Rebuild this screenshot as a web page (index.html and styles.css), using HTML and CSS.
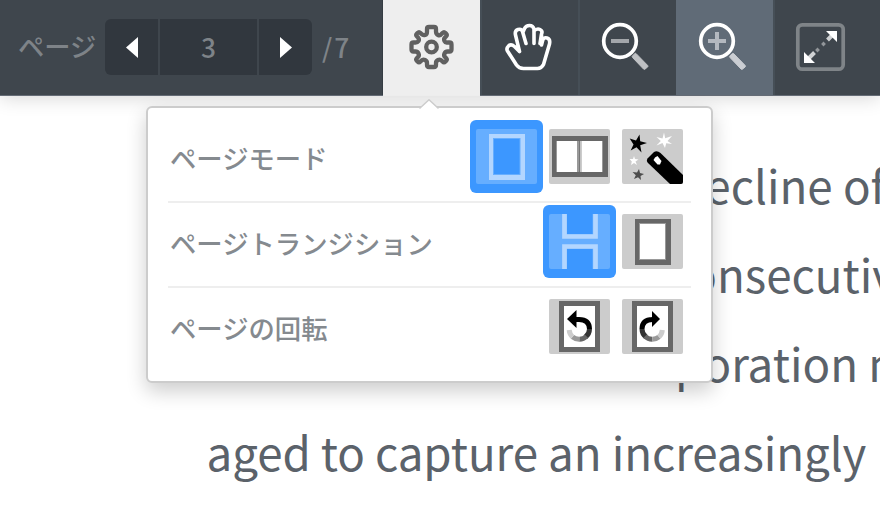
FILE: index.html
```html
<!DOCTYPE html>
<html lang="ja">
<head>
<meta charset="utf-8">
<title>Viewer</title>
<link rel="stylesheet" href="styles.css">
</head>
<body>
<header class="toolbar">
  <div class="pager">
    <span class="pager-label">ページ</span>
    <div class="pager-box">
      <button class="step"><svg width="12" height="21" viewBox="0 0 12 21"><path d="M12 0V21L0 10.5Z" fill="#fff"/></svg></button>
      <span class="current">3</span>
      <button class="step"><svg width="12" height="21" viewBox="0 0 12 21"><path d="M0 0V21L12 10.5Z" fill="#fff"/></svg></button>
    </div>
    <span class="total">/7</span>
  </div>
  <button class="tool gear">
    <svg width="97" height="96" viewBox="0 0 97 96" fill="none" stroke="#606060" stroke-width="4.300" stroke-linejoin="round">
      <circle cx="48.500" cy="47" r="5.300"/>
      <path d="M44 31.500V29Q44 27 46 27H51Q53 27 53 29V31.500Q53 34 55 35T58.500 34L59.500 33Q61 31.500 62.500 33L63 33.500Q64.500 35 63 36.500L62 37.500Q60.500 39 61.500 41T64.500 42.500H66.500Q68.500 42.500 68.500 44.500V49.500Q68.500 51.500 66.500 51.500H64.500Q62.500 51.500 61.500 53.500T62 57L63 58Q64.500 59.500 63 61L62.500 61.500Q61 63 59.500 61.500L58.500 60.500Q57 59 55 60T53 63V65Q53 67 51 67H46Q44 67 44 65V63Q44 61 42 60T38.500 60.500L37.500 61.500Q36 63 34.500 61.500L34 61Q32.500 59.500 34 58L35 57Q36.500 55.500 35.500 53.500T32.500 51.500H30.500Q28.500 51.500 28.500 49.500V44.500Q28.500 42.500 30.500 42.500H32.500Q34.500 42.500 35.500 41T35 37.500L34 36.500Q32.500 35 34 33.500L34.500 33Q36 31.500 37.500 33L38.500 34Q40 35.500 42 35T44 31.500Z"/>
    </svg>
  </button>
  <button class="tool wide">
    <svg width="98" height="95" viewBox="480 0 98 95" fill="none" stroke="#fff" stroke-width="3.600" stroke-linecap="round" stroke-linejoin="round">
      <path d="M519.500 51.500L514.500 46.500Q511 43.500 508.500 46T507.500 51L516.500 65Q519 68.500 523.500 68.500H537.500Q541.500 68.500 543.500 64.500L549.500 44Q550.500 39 547 38T542.500 41L541.500 45M519.500 51.500L515.500 35Q514.500 30.500 518 29.500T522.500 31.500L526 43.500M523 32L524.500 28.500Q526 25.500 529.500 25.500T534 29V43.500M534 31Q537 28 540 29.500T541.500 34L540 43.500M541.500 34V38"/>
    </svg>
  </button>
  <button class="tool wide">
    <svg width="98" height="95" viewBox="578 0 98 95" fill="none">
      <circle cx="620" cy="41" r="16.300" stroke="#fff" stroke-width="3.700"/>
      <path d="M611 41H629" stroke="#a3a6aa" stroke-width="4"/>
      <path d="M636 53.500L647.700 65.500Q648.300 66.300 647.700 66.900L644.900 69.200Q644.200 69.700 643.500 69L632.500 57.500Q631.800 56.500 632.500 55.800L635 53.500Q635.500 53 636 53.500Z" fill="#bfc1c4" stroke="#bfc1c4" stroke-width="1"/>
    </svg>
  </button>
  <button class="tool hovered">
    <svg width="97" height="95" viewBox="676 0 97 95" fill="none">
      <circle cx="717" cy="41" r="16.300" stroke="#fff" stroke-width="3.700"/>
      <path d="M708 41H726M717 32V50" stroke="#b3b8bf" stroke-width="4"/>
      <path d="M733.500 53.500L745.200 65.500Q745.800 66.300 745.200 66.900L742.400 69.200Q741.700 69.700 741 69L730 57.500Q729.300 56.500 730 55.800L732.500 53.500Q733 53 733.500 53.500Z" fill="#cbced3" stroke="#cbced3" stroke-width="1"/>
    </svg>
  </button>
  <button class="tool last">
    <svg width="107" height="95" viewBox="773 0 107 95" fill="none">
      <rect x="797.800" y="24.800" width="45.400" height="44.400" rx="4.500" stroke="#7f8488" stroke-width="3.700"/>
      <path d="M827.500 40L833 34.500M809 58L814.500 52.500" stroke="#d0d2d4" stroke-width="4"/>
      <path d="M822.300 45.200L824.700 42.800M816.300 51.200L818.700 48.800" stroke="#92969a" stroke-width="3.400"/>
      <path d="M826 31H837V42ZM804 52V63H815Z" fill="#fff"/>
    </svg>
  </button>
</header>

<main class="document">
  <p class="line decline">decline of</p>
  <p class="line consecutive">consecutiv</p>
  <p class="line corporation">corporation m</p>
  <p class="line aged">aged to capture an increasingly</p>
</main>

<section class="popup">
  <svg class="arrow" width="20" height="11" viewBox="0 0 20 11"><path d="M0.500 9.500L10 0.500L19.500 9.500V11H0.500Z" fill="#fff"/><path d="M0.500 9.500L10 0.800L19.500 9.500" fill="none" stroke="#ccc" stroke-width="1.500"/></svg>
  <div class="row">
    <span class="label">ページモード</span>
    <button class="option selected">
      <svg width="61" height="55" viewBox="0 0 61 55"><rect width="61" height="55" rx="2" fill="#66aeff"/><rect x="13" y="5" width="36" height="46" fill="#b3d6ff"/><rect x="17" y="9" width="27.500" height="37" fill="#66aeff"/><rect x="18" y="10" width="25.500" height="35" fill="#3c97ff"/></svg>
    </button>
    <button class="option">
      <svg width="61" height="55" viewBox="0 0 61 55"><rect width="61" height="55" rx="2" fill="#ccc"/><rect x="3" y="7" width="56" height="41" fill="#676767"/><rect x="7" y="12" width="47" height="31" fill="#fff"/><path d="M7.500 12V43M53.500 12V43" stroke="#999"/><rect x="28" y="12" width="2" height="31" fill="#999"/><rect x="30" y="12" width="1.500" height="31" fill="#777"/><rect x="31.500" y="12" width="1.500" height="31" fill="#ccc"/></svg>
    </button>
    <button class="option">
      <svg width="61" height="55" viewBox="0 0 61 55"><rect width="61" height="55" rx="2" fill="#ccc"/>
      <path d="M17.500 5.500L18.200 12.200L25 14L18.200 16.200L19.500 23.500L14.500 18.200L8.700 21.500L11.500 15.500L7.700 9.500L14 11.500Z"/>
      <path d="M42 3.500L43.200 9.300L50 7L45.500 12L50 15L44.200 14.200L43 19L40.500 14L34.500 16.500L38.800 12L34.500 8L40.500 9.500Z" fill="#fff"/>
      <path d="M12 27L13 30L16.500 30.500L13.500 32.500L15 36L12 34L9 36L9.800 32.500L7.500 30L11 30Z" fill="#fff"/>
      <path d="M17 40L18 44L22 45L18.500 47L19 51L16 48.300L12 50L13.800 46.300L10.500 43L15 43.500Z" fill="#4c4c4c"/>
      <path d="M25.500 29.500L32 23Q35 21 38.500 24L61 46V53Q61 55 59 55H48L26 34Q24 32 25.500 29.500Z"/><path d="M33 28.500L35.500 27L39.500 32L38 35.500H35.500L31.500 31Z" fill="#fff"/></svg>
    </button>
  </div>
  <div class="row">
    <span class="label">ページトランジション</span>
    <button class="option selected">
      <svg width="61" height="55" viewBox="0 0 61 55"><rect width="61" height="55" rx="2" fill="#66aeff"/><path d="M18 0H43.500V20H18ZM18 35H43.500V55H18Z" fill="#3c97ff"/><path d="M15.500 0V22.500H46.500V0M15.500 55V32.500H46.500V55" fill="none" stroke="#b3d6ff" stroke-width="4.700"/></svg>
    </button>
    <button class="option">
      <svg width="61" height="55" viewBox="0 0 61 55"><rect width="61" height="55" rx="2" fill="#ccc"/><rect x="13" y="5" width="36" height="46" fill="#676767"/><rect x="17" y="9" width="27" height="37" fill="#999"/><rect x="18" y="10" width="25" height="35" fill="#fff"/></svg>
    </button>
  </div>
  <div class="row">
    <span class="label">ページの回転</span>
    <button class="option">
      <svg width="61" height="55" viewBox="0 0 61 55"><rect width="61" height="55" rx="2" fill="#ccc"/><rect x="10" y="2" width="41" height="51" fill="#676767"/><rect x="15" y="7" width="31" height="41" fill="#fff"/><g fill="none" stroke-width="5"><path d="M27 20.500H30Q40.300 20.500 40.500 30" stroke="#000"/><path d="M40.500 30A10.200 10.200 0 0 1 36.500 38" stroke="#333"/><path d="M37.500 37.300A10.200 10.200 0 0 1 30.300 40.200" stroke="#666"/><path d="M30.300 40.200A10.200 10.200 0 0 1 23.500 37.800" stroke="#999"/><path d="M23.500 37.800A10.200 10.200 0 0 1 20.200 31" stroke="#ccc"/></g><path d="M18 20L27.500 11V29Z"/></svg>
    </button>
    <button class="option">
      <svg width="61" height="55" viewBox="0 0 61 55"><rect width="61" height="55" rx="2" fill="#ccc"/><rect x="10" y="2" width="41" height="51" fill="#676767"/><rect x="15" y="7" width="31" height="41" fill="#fff"/><g transform="translate(60.500 0) scale(-1 1)"><g fill="none" stroke-width="5"><path d="M30 20.500Q40.300 20.500 40.500 30M27 20.500H31" stroke="#000"/><path d="M40.500 30A10.200 10.200 0 0 1 36.500 38" stroke="#333"/><path d="M37.500 37.300A10.200 10.200 0 0 1 30.300 40.200" stroke="#666"/><path d="M30.300 40.200A10.200 10.200 0 0 1 23.500 37.800" stroke="#999"/><path d="M23.500 37.800A10.200 10.200 0 0 1 20.200 31" stroke="#ccc"/></g><path d="M22.500 20L30.500 12V28Z"/></g></svg>
    </button>
  </div>
</section>
</body>
</html>
```
FILE: styles.css
```css
* { box-sizing: border-box; }

body {
  position: relative;
  width: 880px;
  height: 520px;
  margin: 0;
  overflow: hidden;
  background: #fff;
  font-family: "Noto Sans CJK JP", sans-serif;
}

svg { display: block; }

button {
  border: 0;
  padding: 0;
  background: none;
  font: inherit;
}

.toolbar {
  position: relative;
  display: flex;
  height: 96px;
  background: #3f464d;
  border-bottom: 1px solid #656c76;
  box-shadow: 0 2px 18px rgba(0, 0, 0, .16);
}

.pager {
  display: flex;
  align-items: center;
  width: 383px;
  padding-left: 18px;
  color: #7e8388;
  font-size: 26.3px;
  font-weight: 500;
  line-height: 40px;
  border-right: 1px solid #353c43;
}

.pager-label { width: 87px; margin-top: -4px; white-space: nowrap; }

.pager-box {
  display: flex;
  gap: 2px;
  width: 207px;
  height: 56px;
  margin-top: -1px;
  border-radius: 6px;
  overflow: hidden;
}

.step, .current {
  display: flex;
  align-items: center;
  justify-content: center;
  background: #31373e;
}

.step { width: 53px; }
.current { flex: 1; padding-bottom: 1px; }
.total { margin: -2px 0 0 10px; letter-spacing: 2px; }

.tool {
  width: 97px;
  height: 95px;
  box-shadow: inset 2px 0 #464f57;
}

.wide { width: 98px; }
.gear { height: 96px; background: #eee; box-shadow: none; }
.hovered { background: #606b77; box-shadow: none; }
.last { width: 107px; }

.document { padding-top: 46px; color: #5b626a; font-size: 45.7px; }

.line {
  height: 89px;
  margin: 0;
  line-height: 84px;
  white-space: nowrap;
}

.decline { padding-left: 677px; }
.consecutive { padding-left: 667px; }
.corporation { padding-left: 607.5px; }
.aged { padding-left: 206.5px; letter-spacing: -.08px; }

.popup {
  position: absolute;
  left: 146px;
  top: 106px;
  width: 567px;
  height: 277px;
  padding: 10px 20px;
  background: #fff;
  border: 2px solid #ccc;
  border-radius: 6px;
  box-shadow: 0 8px 20px rgba(0, 0, 0, .2);
}

.arrow { position: absolute; left: 271px; top: -9px; }

.row {
  display: flex;
  align-items: center;
  height: 85px;
  padding-right: 2px;
  border-bottom: 2px solid #eee;
}

.row:last-child { border-bottom-color: transparent; }

.label {
  flex: 1;
  margin-top: -4px;
  padding-left: 2px;
  color: #858a8f;
  font-size: 26.35px;
  font-weight: 500;
  line-height: 40px;
}

.option {
  width: 73px;
  height: 73px;
  padding: 9px 6px;
  margin-top: -6px;
  border-radius: 6px;
}

.selected { background: #3c97ff; }
```
